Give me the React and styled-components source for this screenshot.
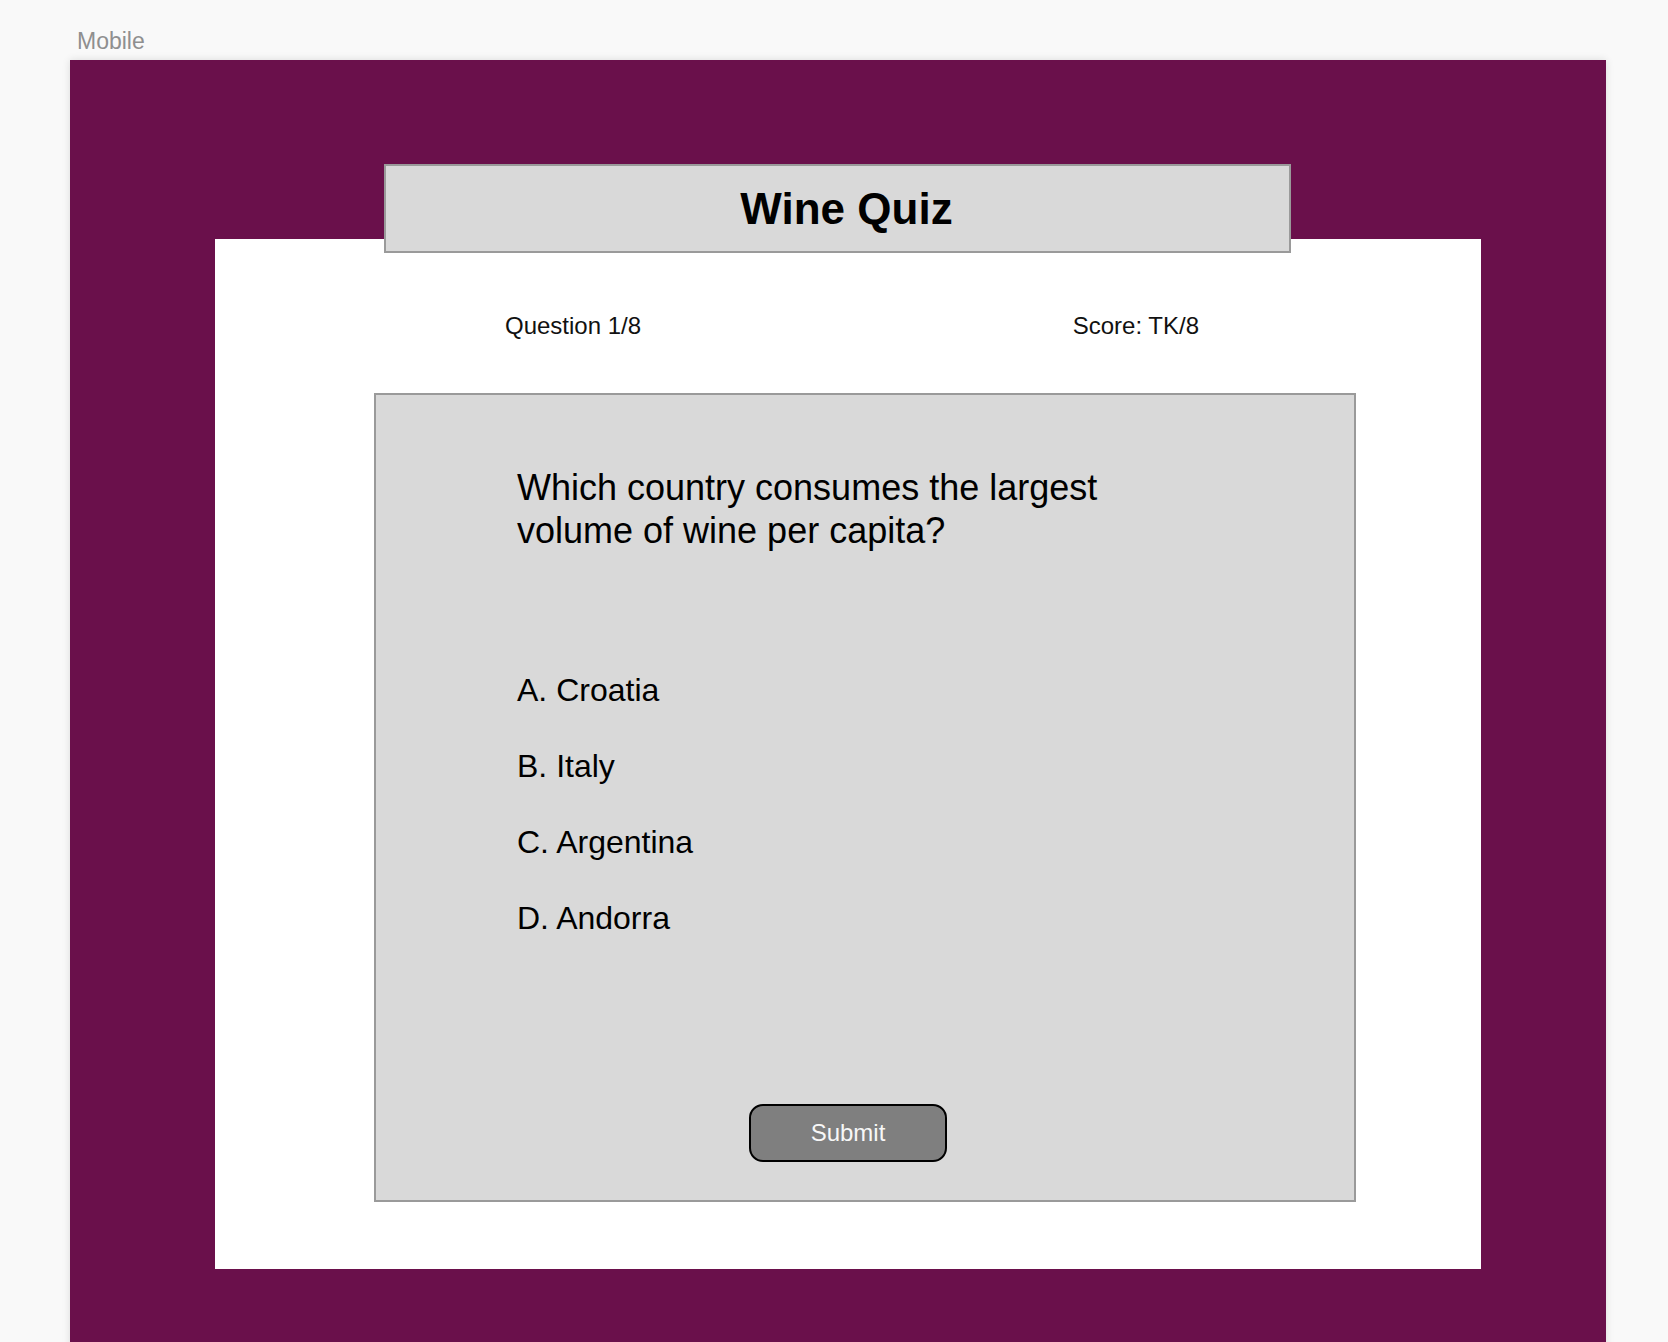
import React from 'react';
import styled, { createGlobalStyle } from 'styled-components';

const GlobalStyle = createGlobalStyle`
  html, body {
    margin: 0;
    padding: 0;
    background: #f9f9f9;
    overflow: hidden;
  }
  body {
    font-family: "Liberation Sans", Arial, sans-serif;
  }
`;

const Page = styled.div`
  padding: 28px 0 0 70px;
`;

const CanvasLabel = styled.div`
  margin: 0 0 6px 7px;
  font-size: 23px;
  line-height: 26px;
  color: #8f8f8f;
`;

const Frame = styled.div`
  box-sizing: border-box;
  width: 1536px;
  height: 1300px;
  padding: 104px 0 0 145px;
  background: #6a104b;
  box-shadow: 0 0 8px rgba(0, 0, 0, 0.12);
  display: flex;
  flex-direction: column;
  align-items: flex-start;
`;

const TitleBar = styled.h1`
  position: relative;
  z-index: 1;
  box-sizing: border-box;
  width: 907px;
  height: 89px;
  margin: 0 0 -14px 169px;
  padding-left: 18px;
  display: flex;
  align-items: center;
  justify-content: center;
  background: #d9d9d9;
  border: 2px solid #9a9a9a;
  font-size: 44px;
  line-height: 50px;
  font-weight: 700;
  color: #000;
`;

const Card = styled.div`
  box-sizing: border-box;
  width: 1266px;
  height: 1030px;
  padding-top: 73px;
  background: #fff;
`;

const StatusRow = styled.div`
  display: flex;
  justify-content: space-between;
  padding: 0 282px 0 290px;
  margin-bottom: 53px;
`;

const StatusText = styled.span`
  font-size: 24px;
  line-height: 28px;
  color: #111;
`;

const QuestionBox = styled.div`
  box-sizing: border-box;
  width: 982px;
  height: 809px;
  margin-left: 159px;
  padding: 71px 0 38px 141px;
  background: #d9d9d9;
  border: 2px solid #9a9a9a;
  display: flex;
  flex-direction: column;
  align-items: flex-start;
`;

const Question = styled.p`
  margin: 0;
  max-width: 640px;
  font-size: 36px;
  line-height: 43px;
  color: #000;
`;

const Options = styled.ul`
  list-style: none;
  margin: 100px 0 0;
  padding: 0;
`;

const Option = styled.li`
  font-size: 32px;
  line-height: 76px;
  color: #000;
`;

const SubmitButton = styled.button`
  box-sizing: border-box;
  width: 198px;
  height: 58px;
  margin: auto 0 0 232px;
  background: #7f7f7f;
  border: 2px solid #000;
  border-radius: 14px;
  font-family: "Liberation Sans", Arial, sans-serif;
  font-size: 24px;
  color: #f7f7f7;
  cursor: pointer;
`;

const options = ['A. Croatia', 'B. Italy', 'C. Argentina', 'D. Andorra'];

export default function App() {
  return (
    <Page>
      <GlobalStyle />
      <CanvasLabel>Mobile</CanvasLabel>
      <Frame>
        <TitleBar>Wine Quiz</TitleBar>
        <Card>
          <StatusRow>
            <StatusText>Question 1/8</StatusText>
            <StatusText>Score: TK/8</StatusText>
          </StatusRow>
          <QuestionBox>
            <Question>Which country consumes the largest volume of wine per capita?</Question>
            <Options>
              {options.map((option) => (
                <Option key={option}>{option}</Option>
              ))}
            </Options>
            <SubmitButton>Submit</SubmitButton>
          </QuestionBox>
        </Card>
      </Frame>
    </Page>
  );
}
